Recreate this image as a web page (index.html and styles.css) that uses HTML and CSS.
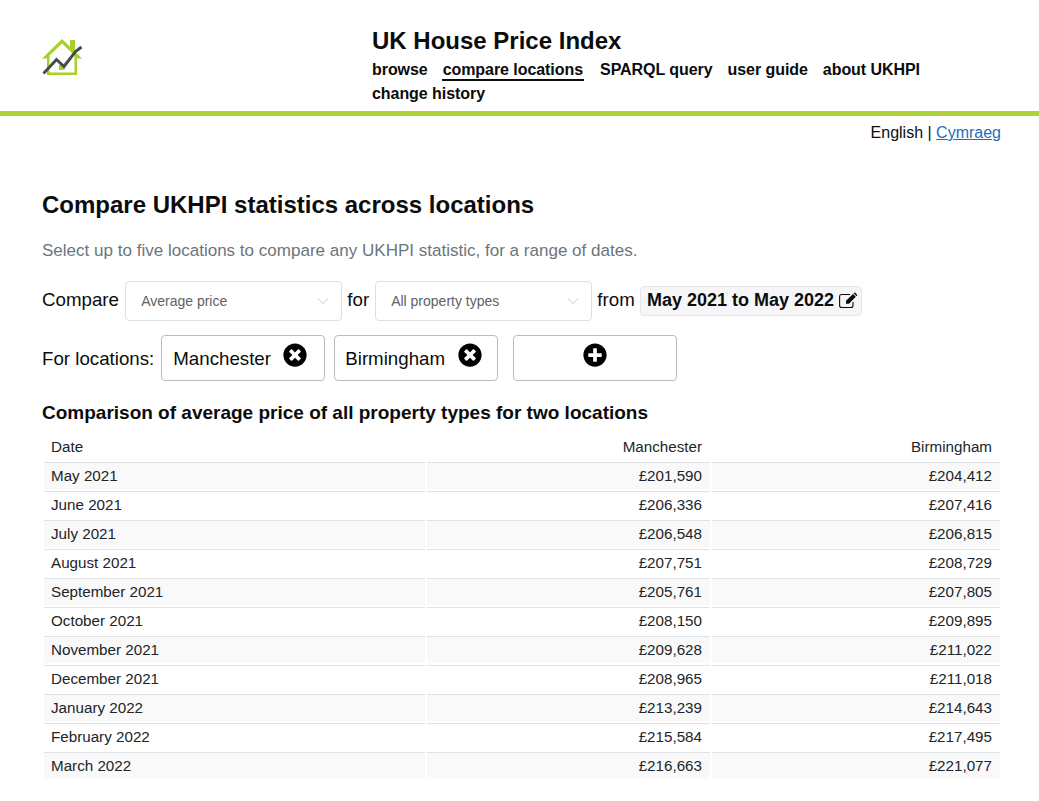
FILE: index.html
```html
<!DOCTYPE html>
<html lang="en">
<head>
<meta charset="utf-8">
<title>UK House Price Index</title>
<link rel="stylesheet" href="styles.css">
</head>
<body>
<header class="site-header">
  <div class="logo">
    <svg width="42" height="40" viewBox="0 0 42 40">
      <path class="logo-house" fill-rule="evenodd" d="M1 21.500 21 2l8 7.800V3h5v11.700L41 21.500H36V38H6V21.500ZM21 6.500 8.500 18.500V35.500H33.500V18.500Z"/>
      <path class="logo-door" d="M18 28h5.500v5H18z"/>
      <path class="logo-line" d="M2.500 36.500 15.500 22.500 23 29.500 34.500 14.500 40.500 10"/>
    </svg>
  </div>
  <div class="masthead">
    <div class="site-title">UK House Price Index</div>
    <nav class="nav">
      <a>browse</a>
      <a class="active">compare locations</a>
      <a>SPARQL query</a>
      <a>user guide</a>
      <a>about UKHPI</a>
      <a>change history</a>
    </nav>
  </div>
</header>
<div class="lang">English | <a href="#">Cymraeg</a></div>
<main class="content">
  <h1>Compare UKHPI statistics across locations</h1>
  <p class="lede">Select up to five locations to compare any UKHPI statistic, for a range of dates.</p>
  <div class="filter-row">
    <span class="lbl-compare">Compare</span>
    <div class="select"><span>Average price</span><svg width="12" height="8" viewBox="0 0 12 8"><path d="M1 1.500l5 5 5-5"/></svg></div>
    <span class="lbl-for">for</span>
    <div class="select"><span>All property types</span><svg width="12" height="8" viewBox="0 0 12 8"><path d="M1 1.500l5 5 5-5"/></svg></div>
    <span>from</span>
    <button class="dates">May 2021 to May 2022
      <svg class="edit" width="19" height="17" viewBox="0 0 19 17">
        <path class="edit-box" d="M14 10V13.500a2 2 0 0 1-2 2H2.600a2 2 0 0 1-2-2V4.500a2 2 0 0 1 2-2H11"/>
        <path class="edit-pen" d="M7 8.800 14 1.900l2.800 2.800L9.900 11.700H7ZM15 .9c.4-.4 1-.4 1.400 0l1.500 1.500c.4.4.4 1 0 1.400l-.4.400-2.900-2.900Z"/>
      </svg>
    </button>
  </div>
  <div class="locations-row">
    <span class="lbl-locations">For locations:</span>
    <div class="chip">Manchester
      <svg class="ico" width="24" height="24" viewBox="0 0 512 512"><use href="#times"/></svg>
    </div>
    <div class="chip chip-b">Birmingham
      <svg class="ico" width="24" height="24" viewBox="0 0 512 512"><path id="times" d="M256 8C119 8 8 119 8 256s111 248 248 248 248-111 248-248S393 8 256 8zm121.600 313.100c4.700 4.700 4.700 12.300 0 17L338 377.600c-4.700 4.700-12.300 4.700-17 0L256 312l-65.100 65.600c-4.700 4.700-12.300 4.700-17 0L134.400 338c-4.700-4.700-4.700-12.300 0-17l65.600-65-65.600-65.100c-4.700-4.700-4.700-12.300 0-17l39.600-39.600c4.700-4.700 12.300-4.700 17 0l65 65.700 65.100-65.600c4.700-4.700 12.300-4.700 17 0l39.600 39.600c4.700 4.700 4.700 12.300 0 17L312 256l65.600 65.100z"/></svg>
    </div>
    <div class="chip chip-add">
      <svg class="ico" width="24" height="24" viewBox="0 0 512 512"><path d="M256 8C119 8 8 119 8 256s111 248 248 248 248-111 248-248S393 8 256 8zm144 276c0 6.600-5.400 12-12 12h-92v92c0 6.600-5.400 12-12 12h-56c-6.600 0-12-5.400-12-12v-92h-92c-6.600 0-12-5.400-12-12v-56c0-6.600 5.400-12 12-12h92v-92c0-6.600 5.400-12 12-12h56c6.600 0 12 5.400 12 12v92h92c6.600 0 12 5.400 12 12v56z"/></svg>
    </div>
  </div>
  <h2>Comparison of average price of all property types for two locations</h2>
  <table class="data">
    <colgroup><col class="c1"><col class="c2"><col class="c3"></colgroup>
    <thead><tr><th>Date</th><th>Manchester</th><th>Birmingham</th></tr></thead>
    <tbody>
      <tr><td>May 2021</td><td>£201,590</td><td>£204,412</td></tr>
      <tr><td>June 2021</td><td>£206,336</td><td>£207,416</td></tr>
      <tr><td>July 2021</td><td>£206,548</td><td>£206,815</td></tr>
      <tr><td>August 2021</td><td>£207,751</td><td>£208,729</td></tr>
      <tr><td>September 2021</td><td>£205,761</td><td>£207,805</td></tr>
      <tr><td>October 2021</td><td>£208,150</td><td>£209,895</td></tr>
      <tr><td>November 2021</td><td>£209,628</td><td>£211,022</td></tr>
      <tr><td>December 2021</td><td>£208,965</td><td>£211,018</td></tr>
      <tr><td>January 2022</td><td>£213,239</td><td>£214,643</td></tr>
      <tr><td>February 2022</td><td>£215,584</td><td>£217,495</td></tr>
      <tr><td>March 2022</td><td>£216,663</td><td>£221,077</td></tr>
    </tbody>
  </table>
</main>
</body>
</html>
```
FILE: styles.css
```css
* { box-sizing: border-box; }
html, body { margin: 0; background: #fff; }
body {
  font-family: "Liberation Sans", Arial, sans-serif;
  color: #0b0c0c;
  overflow: hidden;
  height: 801px;
}
.site-header {
  display: flex;
  height: 116px;
  border-bottom: 5px solid #add136;
}
.logo { width: 372px; padding: 37px 0 0 41px; }
.logo-house { fill: #a7d129; }
.logo-door { fill: #a7d129; }
.logo-line { fill: none; stroke: #4a4a48; stroke-width: 3; }
.masthead { flex: 1; padding-top: 26px; }
.site-title { font-size: 24px; font-weight: 700; line-height: 30px; }
.nav { display: flex; flex-wrap: wrap; width: 600px; margin-top: 4px; }
.nav a {
  font-size: 16px;
  font-weight: 700;
  line-height: 20px;
  letter-spacing: -.06px;
  margin: 0 15px 3px 0;
  height: 21px;
}
.nav a.active {
  border-bottom: 2px solid #0b0c0c;
  padding: 0 1px;
  margin-left: -1px;
  margin-right: 16px;
}
.lang {
  font-size: 16px;
  line-height: 20px;
  text-align: right;
  padding: 7px 38px 0 0;
}
.lang a { color: #1d70b8; }
.content { padding: 0 37px 0 42px; }
h1 { font-size: 24px; line-height: 30px; margin: 47px 0 0; font-weight: 700; }
.lede { font-size: 17.050px; line-height: 22px; margin: 20px 0 0; color: #6c757d; }
.filter-row {
  display: flex;
  align-items: center;
  gap: 5.200px;
  margin-top: 19px;
  height: 40px;
  font-size: 18.720px;
}
.filter-row > span { margin-top: -2px; }
.lbl-compare { margin-right: 1px; }
.lbl-for { margin-right: .8px; }
.select {
  width: 217px;
  height: 40px;
  border: 1px solid #dcdfe6;
  border-radius: 4px;
  display: flex;
  align-items: center;
  justify-content: space-between;
  padding: 0 12px 0 15px;
  font-size: 14px;
  color: #606266;
}
.select svg { fill: none; stroke: #c0c4cc; stroke-width: 1; }
.dates {
  height: 30px;
  width: 222px;
  padding: 0 0 0 6px;
  margin-top: -1px;
  border: 1px solid #e4e6ea;
  border-radius: 4px;
  background: #f6f6f8;
  font: 700 18px "Liberation Sans", Arial, sans-serif;
  color: #0b0c0c;
  display: flex;
  align-items: center;
  gap: 5px;
}
.edit { margin-top: -1px; }
.edit-box { fill: none; stroke: #0b0c0c; stroke-width: 1.100; }
.edit-pen { fill: #0b0c0c; }
.locations-row {
  display: flex;
  align-items: center;
  margin-top: 14px;
  height: 46px;
  font-size: 18.720px;
  gap: 7px;
}
.lbl-locations { margin-top: 2px; }
.chip {
  width: 164px;
  height: 46px;
  border: 1px solid #bdbdbd;
  border-radius: 4px;
  display: flex;
  align-items: center;
  padding: 2px 0 0 11px;
  font-size: 18.720px;
  gap: 12.500px;
}
.chip-b { margin-left: 2px; padding-left: 10px; }
.chip-add { margin-left: 8px; justify-content: center; padding-left: 0; }
.ico { margin-top: -8px; fill: #000; }
h2 { font-size: 19px; line-height: 24px; margin: 20px 0 0; font-weight: 700; }
.data {
  width: 960px;
  margin-top: 6px;
  border-collapse: separate;
  border-spacing: 2px;
  table-layout: fixed;
  font-size: 15.200px;
}
.c1 { width: 381px; }
.c2 { width: 283px; }
.c3 { width: 288px; }
.data th, .data td {
  height: 27px;
  padding: 0 8px;
  font-weight: 400;
  text-align: right;
  border-top: 1px solid #dee2e6;
  color: #212529;
}
.data td { padding-bottom: 2px; }
.data th { border-top: none; }
.data th:first-child, .data td:first-child { text-align: left; padding-left: 7px; }
.data tbody tr:nth-child(odd) td { background: #f9f9f9; }
```
